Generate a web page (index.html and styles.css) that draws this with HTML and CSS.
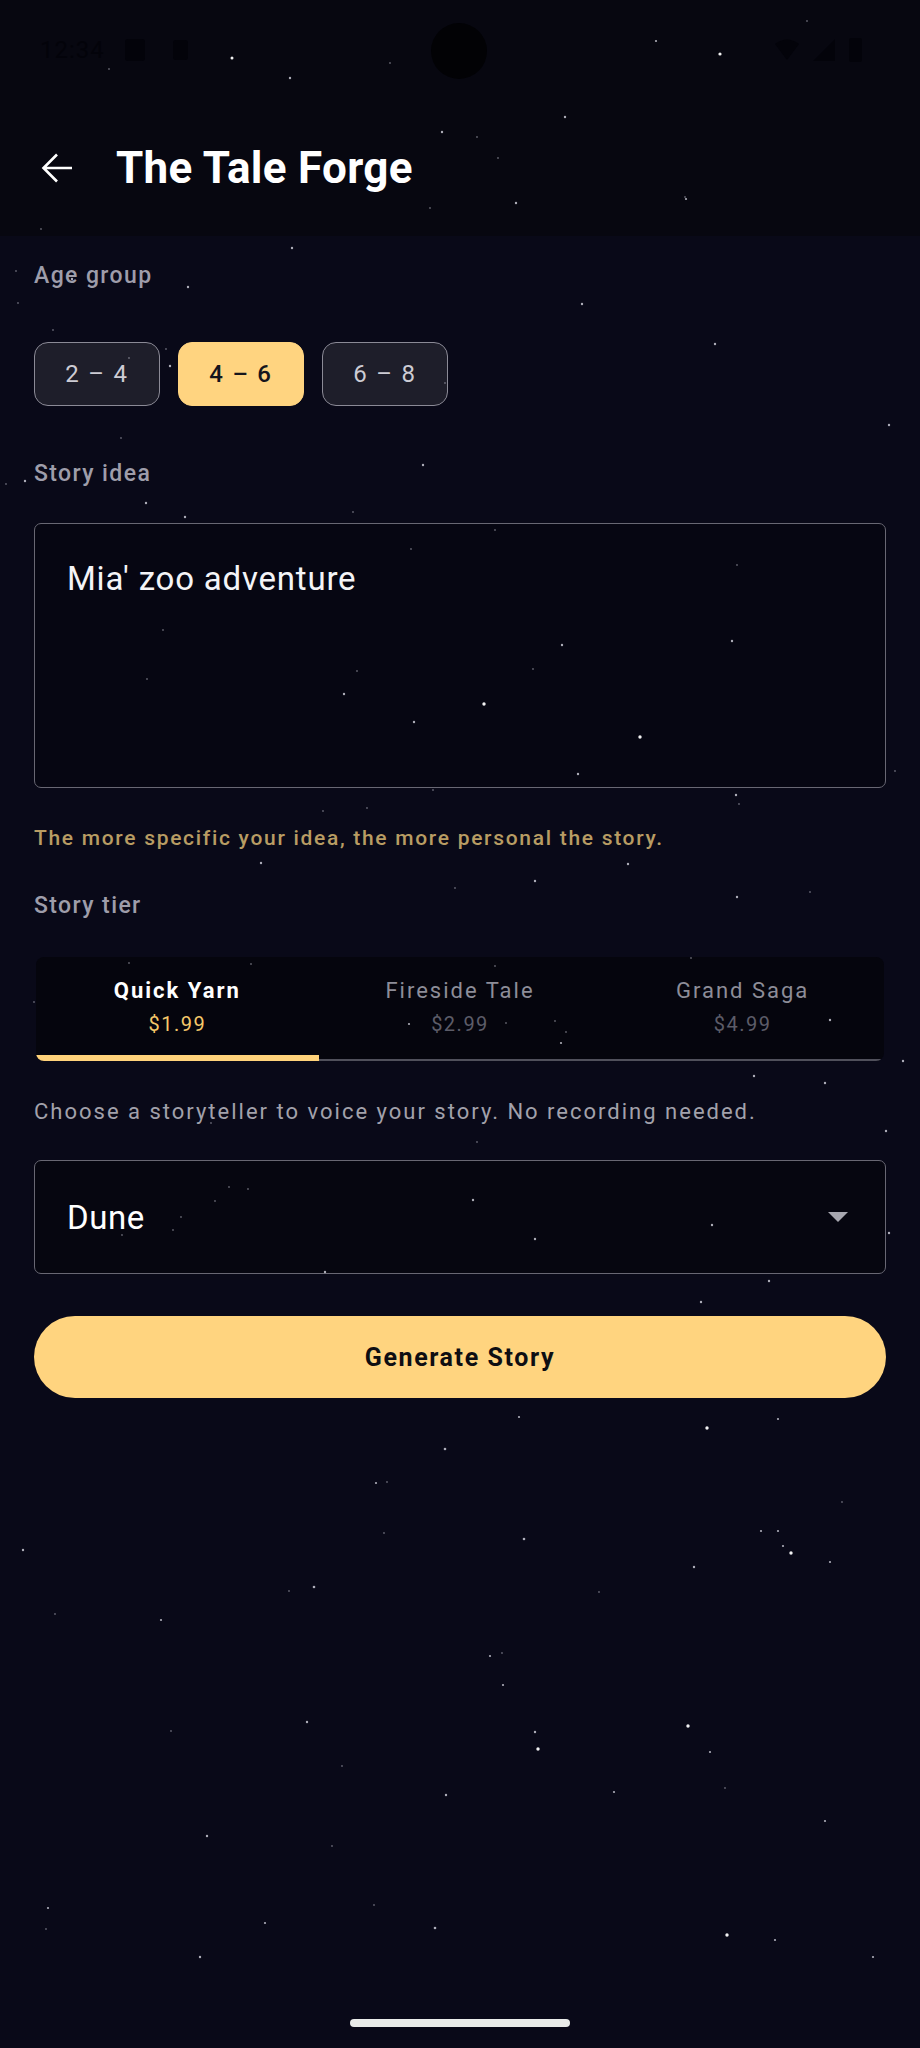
FILE: index.html
```html
<!DOCTYPE html>
<html lang="en">
<head>
    <meta charset="UTF-8">
    <meta name="viewport" content="width=device-width, initial-scale=1.0">
    <title>The Tale Forge</title>
    <link rel="stylesheet" href="styles.css">
</head>
<body>
<div class="screen">

    <!-- Top area: status bar + app bar -->
    <div class="top">
        <div class="status-bar">
            <div class="status-left">
                <span class="time">12:34</span>
                <span class="sb-icon sb-square"></span>
                <span class="sb-icon sb-small"></span>
            </div>
            <div class="camera"></div>
            <div class="status-right">
                <svg width="24" height="22" viewBox="0 0 24 22"><path d="M12 21 L0 5 Q12 -4 24 5 Z" fill="#03030a"/></svg>
                <svg width="22" height="22" viewBox="0 0 22 22"><path d="M22 0 V22 H0 Z" fill="#03030a"/></svg>
                <span class="sb-battery"></span>
            </div>
        </div>

        <header class="app-bar">
            <svg class="back" width="32" height="32" viewBox="0 0 32 32">
                <path d="M31 16 H3 M16 2.5 L2.5 16 L16 29.5" fill="none" stroke="#fff" stroke-width="2.6" stroke-linecap="butt" stroke-linejoin="miter"/>
            </svg>
            <h1>The Tale Forge</h1>
        </header>
    </div>

    <!-- Form -->
    <main class="form">
        <div class="field-label">Age group</div>
        <div class="chips">
            <button class="chip">2 – 4</button>
            <button class="chip chip-active">4 – 6</button>
            <button class="chip">6 – 8</button>
        </div>

        <div class="field-label label-idea">Story idea</div>
        <div class="idea-box">Mia' zoo adventure</div>
        <p class="hint">The more specific your idea, the more personal the story.</p>

        <div class="field-label label-tier">Story tier</div>
        <div class="tiers">
            <div class="tier tier-active">
                <span class="tier-name">Quick Yarn</span>
                <span class="tier-price">$1.99</span>
            </div>
            <div class="tier">
                <span class="tier-name">Fireside Tale</span>
                <span class="tier-price">$2.99</span>
            </div>
            <div class="tier">
                <span class="tier-name">Grand Saga</span>
                <span class="tier-price">$4.99</span>
            </div>
        </div>

        <p class="voice-note">Choose a storyteller to voice your story. No recording needed.</p>

        <div class="select">
            <span>Dune</span>
            <span class="select-arrow"></span>
        </div>

        <button class="generate">Generate Story</button>
    </main>

    <div class="nav-handle"></div>

    <!-- Starfield -->
    <svg class="stars" width="920" height="2048" viewBox="0 0 920 2048">
        <g class="s1">
            <circle cx="707" cy="1428" r="1.7"/><circle cx="791" cy="1553" r="1.7"/><circle cx="538" cy="1749" r="1.7"/>
            <circle cx="688" cy="1726" r="1.7"/><circle cx="727" cy="1935" r="1.7"/><circle cx="484" cy="704" r="1.7"/>
            <circle cx="640" cy="737" r="1.7"/><circle cx="720" cy="54" r="1.6"/><circle cx="232" cy="58" r="1.5"/>
        </g>
        <g class="s2">
            <circle cx="290" cy="78" r="1.2"/><circle cx="565" cy="117" r="1.2"/><circle cx="442" cy="132" r="1.2"/>
            <circle cx="516" cy="203" r="1.2"/><circle cx="292" cy="248" r="1.2"/><circle cx="188" cy="287" r="1.2"/>
            <circle cx="170" cy="366" r="1.2"/><circle cx="423" cy="465" r="1.2"/><circle cx="25" cy="481" r="1.2"/>
            <circle cx="146" cy="503" r="1.2"/><circle cx="185" cy="517" r="1.2"/><circle cx="562" cy="645" r="1.2"/>
            <circle cx="732" cy="641" r="1.2"/><circle cx="344" cy="694" r="1.2"/><circle cx="414" cy="722" r="1.2"/>
            <circle cx="578" cy="774" r="1.2"/><circle cx="736" cy="795" r="1.2"/><circle cx="261" cy="863" r="1.2"/>
            <circle cx="628" cy="864" r="1.2"/><circle cx="535" cy="881" r="1.2"/><circle cx="737" cy="897" r="1.2"/>
            <circle cx="409" cy="1024" r="1.1"/><circle cx="561" cy="1043" r="1.1"/><circle cx="830" cy="1020" r="1.2"/>
            <circle cx="903" cy="1061" r="1.2"/><circle cx="754" cy="1076" r="1.2"/><circle cx="825" cy="1083" r="1.2"/>
            <circle cx="886" cy="1131" r="1.2"/><circle cx="473" cy="1200" r="1.2"/><circle cx="535" cy="1239" r="1.2"/>
            <circle cx="712" cy="1225" r="1.2"/><circle cx="889" cy="1233" r="1.2"/><circle cx="325" cy="1272" r="1.2"/>
            <circle cx="769" cy="1281" r="1.2"/><circle cx="701" cy="1302" r="1.2"/><circle cx="519" cy="1417" r="1.1"/>
            <circle cx="778" cy="1419" r="1.1"/><circle cx="445" cy="1449" r="1.3"/><circle cx="376" cy="1483" r="1.1"/>
            <circle cx="524" cy="1539" r="1.3"/><circle cx="23" cy="1550" r="1.2"/><circle cx="761" cy="1531" r="1.1"/>
            <circle cx="778" cy="1531" r="1.1"/><circle cx="783" cy="1546" r="1.1"/><circle cx="830" cy="1562" r="1.1"/>
            <circle cx="694" cy="1567" r="1.2"/><circle cx="314" cy="1587" r="1.3"/><circle cx="161" cy="1620" r="1.1"/>
            <circle cx="490" cy="1656" r="1.1"/><circle cx="503" cy="1685" r="1.1"/><circle cx="307" cy="1722" r="1.2"/>
            <circle cx="535" cy="1732" r="1.2"/><circle cx="710" cy="1752" r="1.1"/><circle cx="446" cy="1795" r="1.2"/>
            <circle cx="614" cy="1792" r="1.1"/><circle cx="825" cy="1821" r="1.1"/><circle cx="207" cy="1836" r="1.2"/>
            <circle cx="48" cy="1908" r="1.1"/><circle cx="265" cy="1923" r="1.1"/><circle cx="435" cy="1928" r="1.3"/>
            <circle cx="775" cy="1940" r="1.1"/><circle cx="873" cy="1957" r="1.1"/><circle cx="200" cy="1957" r="1.2"/>
            <circle cx="715" cy="344" r="1.2"/><circle cx="889" cy="425" r="1.2"/><circle cx="582" cy="304" r="1.2"/>
            <circle cx="686" cy="199" r="1.1"/><circle cx="656" cy="41" r="1.1"/><circle cx="72" cy="279" r="1.2"/>
        </g>
        <g class="s3">
            <circle cx="109" cy="69" r="0.9"/><circle cx="390" cy="63" r="0.9"/><circle cx="807" cy="21" r="0.9"/>
            <circle cx="477" cy="137" r="0.9"/><circle cx="498" cy="158" r="0.9"/><circle cx="685" cy="197" r="0.9"/>
            <circle cx="430" cy="208" r="0.9"/><circle cx="41" cy="229" r="0.9"/><circle cx="16" cy="271" r="0.9"/>
            <circle cx="18" cy="303" r="0.9"/><circle cx="53" cy="330" r="0.9"/><circle cx="166" cy="349" r="0.9"/>
            <circle cx="129" cy="358" r="0.9"/><circle cx="121" cy="438" r="0.9"/><circle cx="445" cy="383" r="0.9"/>
            <circle cx="6" cy="484" r="0.9"/><circle cx="353" cy="512" r="0.9"/><circle cx="495" cy="530" r="0.9"/>
            <circle cx="411" cy="549" r="0.9"/><circle cx="737" cy="565" r="0.9"/><circle cx="163" cy="630" r="0.9"/>
            <circle cx="533" cy="669" r="0.9"/><circle cx="357" cy="671" r="0.9"/><circle cx="147" cy="679" r="0.9"/>
            <circle cx="895" cy="771" r="0.9"/><circle cx="433" cy="790" r="0.9"/><circle cx="739" cy="804" r="0.9"/>
            <circle cx="367" cy="808" r="0.9"/><circle cx="323" cy="811" r="0.9"/><circle cx="455" cy="888" r="0.9"/>
            <circle cx="810" cy="892" r="0.9"/><circle cx="129" cy="963" r="0.9"/><circle cx="251" cy="964" r="0.9"/>
            <circle cx="495" cy="966" r="0.9"/><circle cx="691" cy="958" r="0.9"/><circle cx="34" cy="1002" r="0.9"/>
            <circle cx="506" cy="1023" r="0.9"/><circle cx="555" cy="1021" r="0.9"/><circle cx="566" cy="1032" r="0.9"/>
            <circle cx="477" cy="1142" r="0.9"/><circle cx="211" cy="1123" r="0.9"/><circle cx="229" cy="1187" r="0.9"/>
            <circle cx="248" cy="1189" r="0.9"/><circle cx="215" cy="1201" r="0.9"/><circle cx="181" cy="1217" r="0.9"/>
            <circle cx="122" cy="1235" r="0.9"/><circle cx="173" cy="1230" r="0.9"/><circle cx="387" cy="1482" r="0.9"/>
            <circle cx="842" cy="1502" r="0.9"/><circle cx="384" cy="1533" r="0.9"/><circle cx="289" cy="1591" r="0.9"/>
            <circle cx="599" cy="1592" r="0.9"/><circle cx="55" cy="1614" r="0.9"/><circle cx="502" cy="1653" r="0.9"/>
            <circle cx="171" cy="1731" r="0.9"/><circle cx="342" cy="1766" r="0.9"/><circle cx="725" cy="1788" r="0.9"/>
            <circle cx="332" cy="1846" r="0.9"/><circle cx="46" cy="1929" r="0.9"/><circle cx="374" cy="1905" r="0.9"/>
        </g>
    </svg>
</div>
</body>
</html>
```

FILE: styles.css
```css
body {
    margin: 0;
    background-color: #090918;
    font-family: Roboto, "Noto Sans", sans-serif;
    color: #fff;
}

.screen {
    position: relative;
    width: 920px;
    height: 2048px;
    display: flex;
    flex-direction: column;
    overflow: hidden;
}

/* status bar + app bar */
.top {
    background-color: #070710;
}

.status-bar {
    position: relative;
    height: 100px;
    display: flex;
    align-items: center;
    justify-content: space-between;
    padding: 0 58px 0 40px;
}

.status-left,
.status-right {
    display: flex;
    align-items: center;
    gap: 14px;
}

.time {
    font-size: 24px;
    color: #03030a;
    letter-spacing: 1px;
}

.sb-icon {
    display: inline-block;
    background: #03030a;
    border-radius: 3px;
}

.sb-square {
    width: 20px;
    height: 22px;
    margin-left: 6px;
}

.sb-small {
    width: 15px;
    height: 20px;
    margin-left: 14px;
}

.sb-battery {
    width: 13px;
    height: 24px;
    background: #03030a;
    border-radius: 2px;
}

.camera {
    position: absolute;
    left: 431px;
    top: 23px;
    width: 56px;
    height: 56px;
    border-radius: 50%;
    background: #020205;
}

.app-bar {
    height: 136px;
    display: flex;
    align-items: center;
    padding-left: 41px;
    gap: 43px;
}

.app-bar h1 {
    margin: 0;
    font-size: 44px;
    line-height: 44px;
    font-weight: 700;
    letter-spacing: 0.3px;
}

/* form */
.form {
    display: flex;
    flex-direction: column;
    padding: 26px 34px 0;
}

.field-label {
    font-size: 23px;
    line-height: 28px;
    font-weight: 500;
    color: #9e9daa;
    letter-spacing: 1.4px;
}

.label-idea {
    margin-top: 54px;
}

.label-tier {
    margin-top: 40px;
}

.chips {
    display: flex;
    gap: 18px;
    margin-top: 52px;
}

.chip {
    width: 126px;
    height: 64px;
    border: 1.5px solid #8b8a96;
    border-radius: 14px;
    background-color: #1e1e2a;
    color: #cdccd4;
    font-family: inherit;
    font-size: 24px;
    letter-spacing: 1.8px;
    padding: 0;
}

.chip-active {
    background-color: #ffd480;
    border-color: #ffd480;
    color: #15151c;
    font-weight: 500;
}

.idea-box {
    margin-top: 35px;
    height: 265px;
    box-sizing: border-box;
    border: 1.5px solid #686773;
    border-radius: 7px;
    background-color: rgba(0, 0, 0, 0.25);
    padding: 35px 32px 0;
    font-size: 33px;
    line-height: 40px;
    letter-spacing: 0.8px;
    color: #f4f4f7;
}

.hint {
    margin: 36px 0 0;
    font-size: 21px;
    line-height: 28px;
    font-weight: 500;
    letter-spacing: 1.7px;
    color: #b89c63;
}

.tiers {
    margin-top: 37px;
    display: grid;
    grid-template-columns: repeat(3, 1fr);
    background-color: #05050d;
    border-radius: 8px;
    overflow: hidden;
    margin-left: 2px;
    margin-right: 2px;
}

.tier {
    display: flex;
    flex-direction: column;
    align-items: center;
    gap: 6px;
    padding: 20px 0 24px;
    box-shadow: inset 0 -2px 0 #50505b;
}

.tier-active {
    box-shadow: inset 0 -6px 0 #ffd27a;
}

.tier-name {
    font-size: 22px;
    line-height: 28px;
    letter-spacing: 2px;
    color: #8d8d98;
}

.tier-price {
    font-size: 20px;
    line-height: 26px;
    letter-spacing: 1.5px;
    color: #5c5c68;
}

.tier-active .tier-name {
    color: #fff;
    font-weight: 700;
}

.tier-active .tier-price {
    color: #f5c86a;
}

.voice-note {
    margin: 37px 0 0;
    font-size: 22px;
    line-height: 28px;
    letter-spacing: 2px;
    color: #a2a1ab;
}

.select {
    margin-top: 34px;
    height: 114px;
    box-sizing: border-box;
    border: 1.5px solid #686773;
    border-radius: 7px;
    background-color: rgba(0, 0, 0, 0.3);
    display: flex;
    align-items: center;
    justify-content: space-between;
    padding: 0 37px 0 32px;
    font-size: 33px;
    letter-spacing: 0.6px;
}

.select-arrow {
    width: 0;
    height: 0;
    border-left: 10px solid transparent;
    border-right: 10px solid transparent;
    border-top: 10px solid #a7a7b0;
}

.generate {
    margin-top: 42px;
    height: 82px;
    border: none;
    border-radius: 41px;
    background-color: #ffd47f;
    color: #0e0e12;
    font-family: inherit;
    font-size: 25px;
    font-weight: 700;
    letter-spacing: 1.6px;
}

.nav-handle {
    margin: auto auto 21px;
    width: 220px;
    height: 8px;
    border-radius: 4px;
    background-color: #e9ebe9;
}

/* decorative starfield over everything */
.stars {
    position: absolute;
    top: 0;
    left: 0;
    pointer-events: none;
}

.s1 {
    fill: #fff;
    opacity: 0.95;
}

.s2 {
    fill: #e6e6f0;
    opacity: 0.75;
}

.s3 {
    fill: #cfcfdc;
    opacity: 0.45;
}
```
